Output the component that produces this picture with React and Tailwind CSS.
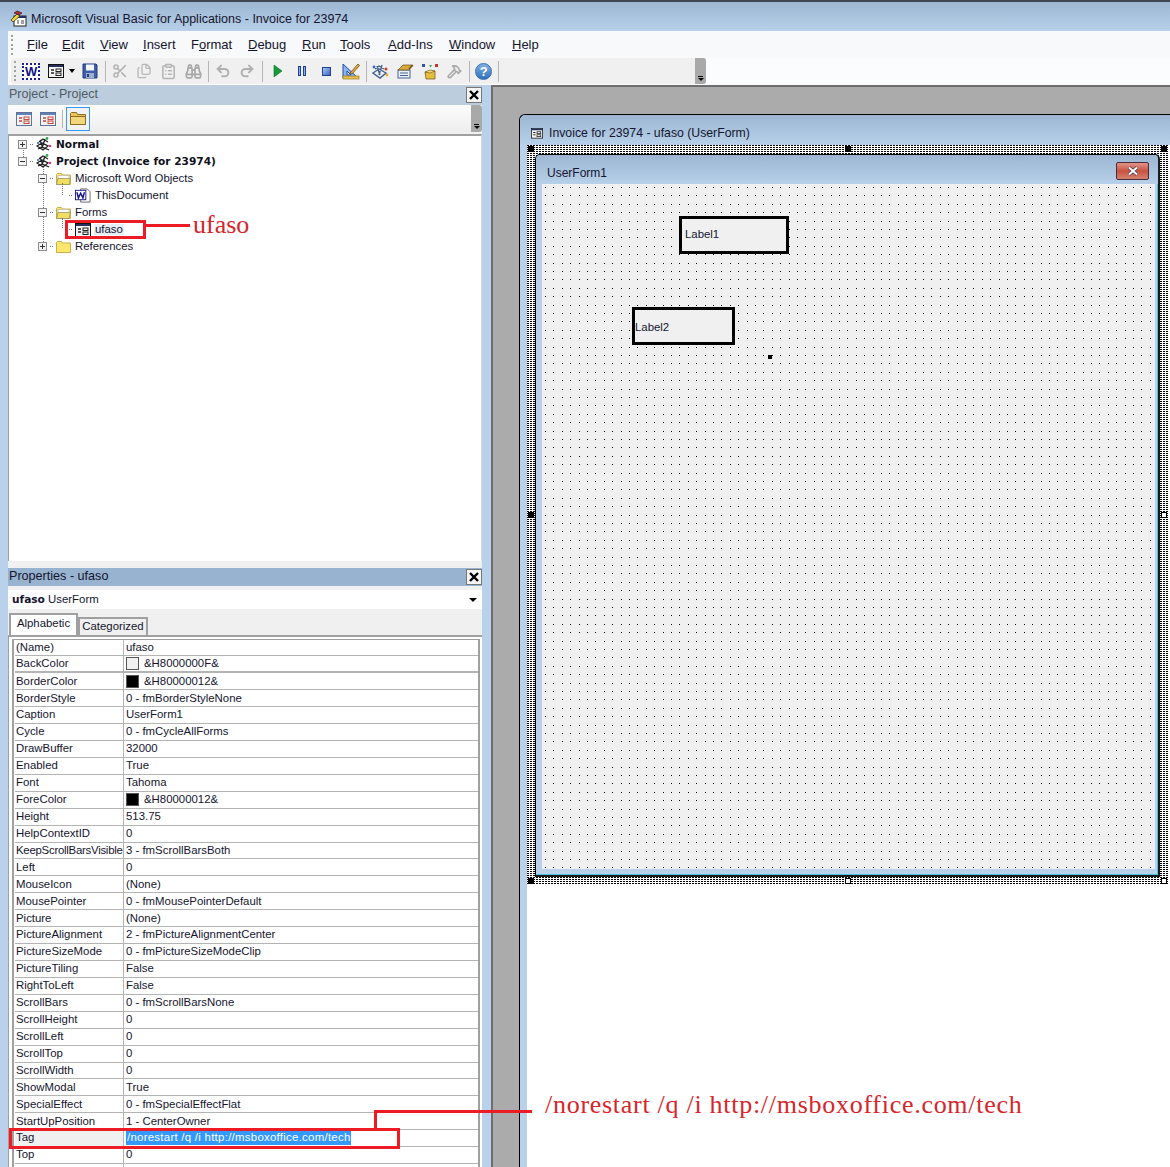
import React from "react";
import { Scissors, Files, ClipboardList, Binoculars, Undo2, Redo2, Hammer } from "lucide-react";

const Form = ({ s = 16, soft }) => (
  <svg width={s} height={s * 0.875} viewBox="0 0 16 14" className="shrink-0">
    <rect x="0.5" y="0.5" width="15" height="13" fill="#f4f4f4" stroke={soft ? "#5b7498" : "#111"} />
    <rect x="1" y="1" width="14" height="2" fill={soft ? "#5f83b8" : "#26305e"} />
    <path d="M3 6h3M3 9h3" stroke={soft ? "#c8453a" : "#222"} strokeWidth="1.4" />
    <rect x="8" y="5" width="5" height="2.5" fill="none" stroke={soft ? "#c8453a" : "#222"} />
    <rect x="8" y="9" width="5" height="2.5" fill="none" stroke={soft ? "#c8453a" : "#222"} />
  </svg>
);
const Folder = ({ open }) => (
  <svg width="15" height="13" viewBox="0 0 15 13" className="shrink-0">
    <path d="M0.5 12.5V2.5l1-1h4l1 1.5h8v9.5z" fill="#fbe76c" stroke="#c9b04a" />
    {open && <path d="M2 3.5h11v4H2z" fill="#fff" stroke="#aaa" strokeWidth="0.6" />}
    {open && <path d="M0.5 12.5l1.5-6h12.5l-1.5 6z" fill="#f3df5f" stroke="#8a8a6a" strokeWidth="0.7" />}
  </svg>
);
const Proj = () => (
  <svg width="16" height="15" viewBox="0 0 16 15" className="shrink-0">
    <path d="M1 9l5-3 6 3-5 4zM3 5l4-3 5 3M4 3l3 8M9 2l-3 9M2 12l4-2 7 3" fill="none" stroke="#222" strokeWidth="1.3" />
    <circle cx="11" cy="1.5" r="1.4" fill="#2fa84f" />
    <circle cx="14" cy="9" r="1.3" fill="#d4358d" />
    <circle cx="2" cy="6" r="1.1" fill="#3a67c7" />
  </svg>
);
const WordDoc = () => (
  <svg width="16" height="15" viewBox="0 0 17 15" className="shrink-0">
    <path d="M6 .5h7l3 3v11H6z" fill="#fff" stroke="#666" />
    <rect x="0.5" y="2" width="11" height="10" fill="#fff" stroke="#1a1a9c" />
    <path d="M2 4l1.6 6L6 5l2.4 5L10 4" fill="none" stroke="#12128c" strokeWidth="1.5" />
  </svg>
);
const Expand = ({ minus }) => (
  <span className="relative flex h-[9px] w-[9px] shrink-0 items-center justify-center border border-[#8a8a8a] bg-[#f4f4f4]">
    <span className="h-px w-[5px] bg-[#333]" />
    {!minus && <span className="absolute h-[5px] w-px bg-[#333]" />}
  </span>
);
const Sep = ({ m = "mx-[3px]" }) => <span className={`h-[21px] w-px shrink-0 bg-[#b5b5b5] ${m}`} />;
const Slot = ({ children }) => <span className="flex h-[24px] w-[24.5px] shrink-0 items-center justify-center">{children}</span>;
const Chevron = () => (
  <span className="flex h-full w-[11px] shrink-0 flex-col items-center justify-end rounded-r-[3px] bg-[#a9a9a9] pb-[3px]">
    <span className="mb-px h-px w-[5px] bg-black" />
    <span className="h-0 w-0 border-x-[3px] border-t-[3px] border-x-transparent border-t-black" />
  </span>
);
const Grip = () => (
  <span className="mr-[3px] flex h-[20px] w-[2px] shrink-0 flex-col justify-between">
    <span className="h-[2px] bg-[#a0a0a0]" /><span className="h-[2px] bg-[#a0a0a0]" /><span className="h-[2px] bg-[#a0a0a0]" /><span className="h-[2px] bg-[#a0a0a0]" /><span className="h-[2px] bg-[#a0a0a0]" />
  </span>
);
const CloseBox = () => (
  <span className="flex h-[16px] w-[16px] items-center justify-center border border-[#777] bg-[#f4f4f4] text-[15px] leading-none font-bold text-black">
    <svg width="10" height="10" viewBox="0 0 10 10"><path d="M1 1l8 8M9 1l-8 8" stroke="#000" strokeWidth="2.4" /></svg>
  </span>
);

const menus = [
  ["w-[35px]", "F", "ile"], ["w-[38px]", "E", "dit"], ["w-[43px]", "V", "iew"], ["w-[48px]", "I", "nsert"],
  ["w-[57px]", "Fo", "rmat", 1], ["w-[54px]", "D", "ebug"], ["w-[38px]", "R", "un"], ["w-[48px]", "T", "ools"],
  ["w-[61px]", "A", "dd-Ins"], ["w-[63px]", "W", "indow"], ["w-[40px]", "H", "elp"],
];

const rows = [
  ["(Name)", "ufaso"], ["BackColor", "&H8000000F&", "#f0f0f0"], ["BorderColor", "&H80000012&", "#000"],
  ["BorderStyle", "0 - fmBorderStyleNone"], ["Caption", "UserForm1"], ["Cycle", "0 - fmCycleAllForms"],
  ["DrawBuffer", "32000"], ["Enabled", "True"], ["Font", "Tahoma"], ["ForeColor", "&H80000012&", "#000"],
  ["Height", "513.75"], ["HelpContextID", "0"], ["KeepScrollBarsVisible", "3 - fmScrollBarsBoth"], ["Left", "0"],
  ["MouseIcon", "(None)"], ["MousePointer", "0 - fmMousePointerDefault"], ["Picture", "(None)"],
  ["PictureAlignment", "2 - fmPictureAlignmentCenter"], ["PictureSizeMode", "0 - fmPictureSizeModeClip"],
  ["PictureTiling", "False"], ["RightToLeft", "False"], ["ScrollBars", "0 - fmScrollBarsNone"], ["ScrollHeight", "0"],
  ["ScrollLeft", "0"], ["ScrollTop", "0"], ["ScrollWidth", "0"], ["ShowModal", "True"],
  ["SpecialEffect", "0 - fmSpecialEffectFlat"], ["StartUpPosition", "1 - CenterOwner"],
  ["Tag", "/norestart /q /i http://msboxoffice.com/tech", null, 1], ["Top", "0"], ["", ""],
];

const Row = ({ r }) => (
  <div className={`flex h-[16.93px] shrink-0 items-center border-[#b4b4b4] text-[11.4px] leading-none text-[#14142e] ${r[0] === "BackColor" ? "border-b-2" : "border-b"}`}>
    <div className={`flex h-full w-[109px] shrink-0 items-center overflow-hidden whitespace-nowrap border-r border-[#b4b4b4] pl-[1px] ${r[3] ? "bg-[#f0f0f0]" : ""} ${r[0] === "KeepScrollBarsVisible" ? "tracking-[-0.25px]" : ""}`}>{r[0]}</div>
    <div className="flex h-full items-center pl-[2px]">
      {r[2] && <span className="mr-[5px] h-[13px] w-[13px] shrink-0 border border-[#555]" style={{ background: r[2] }} />}
      {r[3] ? <span className="bg-[#3399ff] py-[1px] pl-[1px] pr-0 tracking-[0.28px] text-white">{r[1]}</span> : r[1]}
    </div>
  </div>
);

const TreeRow = ({ pl, exp, minus, icon, text, bold, sel }) => (
  <div className={`flex h-[17px] items-center text-[11.4px] leading-none text-[#14142e] ${pl}`}>
    {exp ? <Expand minus={minus} /> : <span className="h-[9px] w-[9px] shrink-0" />}
    <span className="mx-[3px] h-0 w-[3px] border-t border-dotted border-[#777]" />
    {icon}
    <span className={`ml-[3px] whitespace-nowrap px-[1px] ${bold ? "font-['DejaVu_Sans'] text-[10.6px] font-bold text-[#101020]" : ""} ${sel ? "bg-[#e8eef6]" : ""}`}>{text}</span>
  </div>
);

const Handle = ({ c, white }) => <span className={`absolute h-[6px] w-[6px] border border-black ${white ? "bg-white" : "bg-black"} ${c}`} />;

export default function App() {
  return (
    <div className="relative flex h-[1167px] w-[1170px] flex-col overflow-hidden bg-[#b9d1ea] font-['Liberation_Sans',sans-serif] text-[12px] text-[#14142e]">
      <div className="flex h-[31px] shrink-0 items-center border-t-2 border-[#3f4650] bg-gradient-to-b from-[#9cb5d1] to-[#b8d1ea] pl-[10px] pt-[5px] text-[12.5px]">
        <svg width="18" height="18" viewBox="0 0 18 18" className="mr-[3px] shrink-0">
          <rect x="4" y="6" width="12" height="10" fill="#fff" stroke="#222" />
          <rect x="4" y="6" width="12" height="2" fill="#24306a" />
          <path d="M7 11h2M7 13h2M11 11h3M11 13h3" stroke="#444" />
          <path d="M1 10l6-6 3 2-7 6z" fill="#f2d531" stroke="#222" strokeWidth="0.7" />
          <path d="M4 3l3-2 5 2-3 2z" fill="#c8242c" stroke="#222" strokeWidth="0.7" />
        </svg>
        <span>Microsoft Visual Basic for Applications - Invoice for 23974</span>
      </div>

      <div className="ml-[8px] flex h-[27px] shrink-0 items-center bg-[#f8f9fa] pl-[3px] text-[13px]">
        <Grip />
        <span className="w-[11px]" />
        {menus.map((m) => (
          <span key={m[1] + m[2]} className={`shrink-0 whitespace-nowrap ${m[0]}`}>
            {m[3] ? <>F<u>o</u>{m[2]}</> : <><u>{m[1]}</u>{m[2]}</>}
          </span>
        ))}
      </div>

      <div className="ml-[8px] flex h-[27px] shrink-0 items-stretch bg-[#fbfcfd] pl-[3px]">
        <div className="flex h-[26px] w-[695px] shrink-0 items-center rounded-l-[3px] bg-[#f0f0f0] pl-[3px]">
          <Grip />
          <Slot>
            <span className="flex h-[17px] w-[18px] items-center justify-center border-2 border-dotted border-[#1a1a9c] bg-white font-['Liberation_Sans'] text-[13px] leading-none font-bold text-[#12128c]">W</span>
          </Slot>
          <Slot><Form /></Slot>
          <span className="ml-[1px] mr-[3px] h-0 w-0 border-x-[3.5px] border-t-[4px] border-x-transparent border-t-black" />
          <Slot>
            <svg width="16" height="16" viewBox="0 0 16 16"><path d="M1 1h13l1 1v13H1z" fill="#3f5ea8" stroke="#233a7c" /><rect x="4" y="1.5" width="8" height="6" fill="#f3f6fc" /><rect x="4" y="10" width="8" height="5" fill="#9fb0cf" /><rect x="5" y="11" width="2" height="3" fill="#233a7c" /></svg>
          </Slot>
          <Sep m="mx-[2px]" />
          <Slot><Scissors size={16} color="#b4b4b4" strokeWidth={2.4} /></Slot>
          <Slot><Files size={16} color="#b8b8b8" strokeWidth={2} /></Slot>
          <Slot><ClipboardList size={17} color="#b4b4b4" strokeWidth={2.2} /></Slot>
          <Slot><Binoculars size={17} color="#a8a8a8" strokeWidth={2.4} /></Slot>
          <Sep m="mx-[2px]" />
          <Slot><Undo2 size={16} color="#b0b0b0" strokeWidth={3} /></Slot>
          <Slot><Redo2 size={16} color="#b0b0b0" strokeWidth={3} /></Slot>
          <Sep m="ml-[2px] mr-[3px]" />
          <Slot><svg width="10" height="12" viewBox="0 0 10 12"><path d="M1 0l8 6-8 6z" fill="#169a3b" stroke="#0d6f2a" strokeWidth="0.6" /></svg></Slot>
          <Slot>
            <span className="flex gap-[2px]"><span className="h-[10px] w-[3px] border border-[#1f3f95] bg-[#8fb0ea]" /><span className="h-[10px] w-[3px] border border-[#1f3f95] bg-[#8fb0ea]" /></span>
          </Slot>
          <Slot><span className="h-[9px] w-[9px] border border-[#1f3f95] bg-gradient-to-br from-[#a9c6f3] to-[#3c67c2]" /></Slot>
          <Slot>
            <svg width="18" height="18" viewBox="0 0 18 18"><path d="M1 2v14h15z" fill="#8db4ea" stroke="#1f4fa8" /><path d="M5 9v4h4z" fill="#f0f0f0" stroke="#1f4fa8" /><rect x="1" y="14" width="16" height="3" fill="#e8c04c" stroke="#8f6a12" strokeWidth="0.6" /><path d="M8 11L16 2l1.5 1.5L10 12z" fill="#e9a93a" stroke="#5c3b0c" strokeWidth="0.7" /></svg>
          </Slot>
          <Sep m="mx-[2px]" />
          <Slot>
            <svg width="17" height="17" viewBox="0 0 17 17"><path d="M1 10l6-4 7 4-6 5zM3 6l4-3 5 3M5 3l3 9M10 2l-3 10" fill="none" stroke="#44608f" strokeWidth="1.4" /><circle cx="14" cy="6" r="1.5" fill="#d43a2c" /><circle cx="15" cy="12" r="1.4" fill="#e8a92c" /><circle cx="2" cy="4" r="1.4" fill="#3a67c7" /></svg>
          </Slot>
          <Slot>
            <svg width="17" height="16" viewBox="0 0 17 16"><rect x="1" y="7" width="12" height="8" fill="#eef3fa" stroke="#44608f" /><path d="M3 10h8M3 12.5h8" stroke="#44608f" /><path d="M1 7l5-5h9l-3 5z" fill="#d8a93c" stroke="#6b4d12" strokeWidth="0.7" /><path d="M12 6l4-4" stroke="#6b4d12" strokeWidth="1.5" /></svg>
          </Slot>
          <Slot>
            <svg width="18" height="17" viewBox="0 0 18 17"><path d="M4 9l10-1v8H5z" fill="#e7bd3e" stroke="#6b4d12" strokeWidth="0.7" /><path d="M4 9l5-2 5 1-5 2z" fill="#f5dc7e" stroke="#6b4d12" strokeWidth="0.6" /><rect x="1" y="1" width="3" height="3" fill="#3a4fa8" /><rect x="14" y="1" width="3" height="3" fill="#c8342c" /><path d="M8 2l3 0-1.5 2.5z" fill="#2fa84f" /></svg>
          </Slot>
          <Slot><Hammer size={15} color="#aaaaaa" strokeWidth={2.6} /></Slot>
          <Sep m="mx-[2px]" />
          <Slot>
            <span className="flex h-[17px] w-[17px] items-center justify-center rounded-full border border-[#3a6fb0] bg-gradient-to-b from-[#7fb0e4] to-[#2f70bc] font-['Liberation_Sans'] text-[13px] leading-none font-bold text-white">?</span>
          </Slot>
          <Sep m="mx-[2px]" />
          <div className="flex-1" />
          <span className="h-[26px]"><Chevron /></span>
        </div>
      </div>

      <div className="flex min-h-0 flex-1">
        <div className="ml-[8px] flex w-[474px] shrink-0 flex-col bg-[#f0f0f0]">
          <div className="flex h-[20px] shrink-0 items-center justify-between bg-[#bccddd] pl-[1px] pr-[0px] text-[12.5px] text-[#4f5b66]">
            <span className="pb-[2px]">Project - Project</span>
            <CloseBox />
          </div>
          <div className="flex h-[27px] shrink-0 items-center bg-gradient-to-b from-[#fcfcfc] to-[#eeeeee] pl-[4px]">
            <span className="flex h-[24px] w-[24px] items-center justify-center"><Form soft /></span>
            <span className="flex h-[24px] w-[24px] items-center justify-center"><Form soft /></span>
            <span className="ml-[2px] mr-[3px] h-[18px] w-px bg-[#b5b5b5]" />
            <span className="flex h-[24px] w-[24px] items-center justify-center border border-[#3399ff] bg-[#f2f2f2]">
              <svg width="16" height="13" viewBox="0 0 16 13"><path d="M.5 12.5V1.5l1-1h5l1 2h8v10z" fill="#e9c65f" stroke="#8a6c1a" /><path d="M.5 12.5V4.5h15v8z" fill="#f2d67c" stroke="#8a6c1a" /></svg>
            </span>
            <div className="flex-1" />
            <span className="h-[27px]"><Chevron /></span>
          </div>
          <div className="relative mt-[2px] h-[427px] shrink-0 border-t-2 border-l border-r border-[#a0a0a0] border-r-[#d8d8d8] bg-white">
            <span className="absolute left-[14px] top-[9px] h-[18px] w-0 border-l border-dotted border-[#777]" />
            <span className="absolute left-[34px] top-[31px] h-[77px] w-0 border-l border-dotted border-[#777]" />
            <span className="absolute left-[53px] top-[47px] h-[12px] w-0 border-l border-dotted border-[#777]" />
            <span className="absolute left-[53px] top-[82px] h-[10px] w-0 border-l border-dotted border-[#777]" />
            <TreeRow pl="pl-[9px]" exp icon={<Proj />} text="Normal" bold />
            <TreeRow pl="pl-[9px]" exp minus icon={<Proj />} text="Project (Invoice for 23974)" bold />
            <TreeRow pl="pl-[29px]" exp minus icon={<Folder open />} text="Microsoft Word Objects" />
            <TreeRow pl="pl-[48px]" icon={<WordDoc />} text="ThisDocument" />
            <TreeRow pl="pl-[29px]" exp minus icon={<Folder open />} text="Forms" />
            <TreeRow pl="pl-[48px]" icon={<Form />} text="ufaso" sel />
            <TreeRow pl="pl-[29px]" exp icon={<Folder />} text="References" />
          </div>
          <div className="h-[7px] shrink-0" />
          <div className="flex h-[18px] shrink-0 items-center justify-between bg-[#98b3d0] pl-[1px] pr-[0px] text-[12.6px]">
            <span className="pb-[1px]">Properties - ufaso</span>
            <CloseBox />
          </div>
          <div className="mt-[4px] flex h-[19px] shrink-0 items-center justify-between bg-white pl-[4px] pr-[5px] pt-[1px] text-[11.4px]">
            <span><b className="font-['DejaVu_Sans'] text-[10.6px]">ufaso</b> UserForm</span>
            <span className="h-0 w-0 border-x-[4px] border-t-[4px] border-x-transparent border-t-black" />
          </div>
          <div className="mt-[4px] flex h-[22px] shrink-0 items-end pl-[1px]">
            <span className="z-10 flex h-[22px] w-[69px] items-center justify-center border-x-2 border-t-2 border-[#a0a0a0] bg-white pb-[3px] text-[11.4px]">Alphabetic</span>
            <span className="flex h-[18px] w-[70px] items-center justify-center border-x-2 border-t-2 border-[#a0a0a0] bg-[#f0f0f0] pb-[1px] text-[11.4px]">Categorized</span>
          </div>
          <div className="flex min-h-0 flex-1 flex-col border-t-2 border-l border-[#a0a0a0] bg-white pl-[3px] pr-[2px] pt-[1.5px]">
            <div className="flex min-h-0 flex-1 flex-col overflow-hidden border-x-2 border-t border-[#a0a0a0] pl-[1px]">
              {rows.map((r, i) => <Row key={i} r={r} />)}
            </div>
          </div>
        </div>

        <div className="ml-[9px] min-w-0 flex-1">
          <div className="h-full border-l-2 border-t-2 border-[#6e6e6e] bg-[#ababab] pl-[26px] pt-[27px]">
            <div className="flex h-full flex-col rounded-tl-[6px] border-l border-t border-black bg-[#b9d1ea]">
              <div className="flex h-[30px] shrink-0 items-center rounded-tl-[6px] bg-gradient-to-b from-[#9cb5d1] to-[#b8d1ea] pl-[11px] pt-[7px] text-[12.25px]">
                <Form s={12} />
                <span className="ml-[6px]">Invoice for 23974 - ufaso (UserForm)</span>
              </div>
              <div className="ml-[7px] min-h-0 flex-1 bg-white">
                <div className="relative h-[740px] w-[641px] bg-[repeating-linear-gradient(180deg,transparent_0_1px,#fff_1px_2px),repeating-linear-gradient(90deg,#000_0_2px,#fff_2px_3px)] pb-[8px] pl-[8px] pr-[8px] pt-[9px]">
                  <Handle c="left-[1px] top-[1px]" />
                  <Handle c="left-[318px] top-[1px]" />
                  <Handle c="right-[1px] top-[1px]" />
                  <Handle c="left-[1px] top-[367px]" />
                  <Handle c="right-[1px] top-[367px]" white />
                  <Handle c="left-[1px] bottom-[1px]" />
                  <Handle c="left-[318px] bottom-[1px]" white />
                  <Handle c="right-[1px] bottom-[1px]" white />
                  <div className="flex h-full flex-col rounded-t-[5px] border-b-2 border-r-2 border-l border-t border-b-[#1a1a1a] border-r-[#1a1a1a] border-l-black border-t-black bg-[#b9d1ea] shadow-[inset_-1px_-1px_0_#4fc4e0]">
                    <div className="flex h-[29px] shrink-0 items-center justify-between rounded-t-[5px] bg-gradient-to-b from-[#9cb5d1] to-[#b8d1ea] pl-[11px] pr-[9px] text-[12px]">
                      <span className="mt-[6px]">UserForm1</span>
                      <span className="mt-[3px] flex h-[18px] w-[33px] items-center justify-center rounded-[2px] border border-[#4a2a3a] bg-gradient-to-b from-[#e2938a] via-[#c8523f] to-[#d2826f]">
                        <svg width="12" height="10" viewBox="0 0 12 10"><path d="M2 1.5l8 7M10 1.5l-8 7" stroke="#3a3a4a" strokeWidth="3.4" /><path d="M2 1.5l8 7M10 1.5l-8 7" stroke="#fff" strokeWidth="2" /></svg>
                      </span>
                    </div>
                    <div className="relative ml-[6px] mr-[3px] mb-[6px] min-h-0 flex-1 bg-[#f0f0f0] bg-[repeating-linear-gradient(180deg,transparent_0_1px,#f0f0f0_1px_8px,transparent_8px_9px,#f0f0f0_9px_17px,transparent_17px_18px,#f0f0f0_18px_25px,transparent_25px_26px,#f0f0f0_26px_34px,transparent_34px_35px,#f0f0f0_35px_42px),repeating-linear-gradient(90deg,#000_0_1px,transparent_1px_8px,#000_8px_9px,transparent_9px_17px,#000_17px_18px,transparent_18px_25px,#000_25px_26px,transparent_26px_34px,#000_34px_35px,transparent_35px_42px)] bg-[position:0_3px,3px_0]">
                      <div className="absolute left-[137px] top-[32px] flex h-[38px] w-[110px] items-center border-[3px] border-black bg-[#f0f0f0] pl-[3px] text-[11.4px]">Label1</div>
                      <div className="absolute left-[90px] top-[123px] flex h-[38px] w-[103px] items-center border-[3px] border-black bg-[#f0f0f0] pt-[3px] text-[11.4px]">Label2</div>
                      <span className="absolute left-[226px] top-[171px] h-[4px] w-[4px] bg-black" />
                    </div>
                  </div>
                </div>
              </div>
            </div>
          </div>
        </div>
      </div>

      <div className="absolute left-[65px] top-[220px] h-[19px] w-[81px] border-[3px] border-[#ed1c24]" />
      <div className="absolute left-[145px] top-[224px] h-[3px] w-[45px] bg-[#ed1c24]" />
      <div className="absolute left-[193px] top-[210px] font-['Liberation_Serif'] text-[26px] leading-[30px] text-[#d7252b]">ufaso</div>
      <div className="absolute left-[9px] top-[1128px] h-[21px] w-[391px] border-[3px] border-[#ed1c24]" />
      <div className="absolute left-[374px] top-[1110px] h-[18px] w-[3px] bg-[#ed1c24]" />
      <div className="absolute left-[374px] top-[1110px] h-[3px] w-[158px] bg-[#ed1c24]" />
      <div className="absolute left-[545px] top-[1090px] whitespace-nowrap font-['Liberation_Serif'] text-[26px] leading-[30px] tracking-[0.72px] text-[#d7252b]">/norestart /q /i http://msboxoffice.com/tech</div>
    </div>
  );
}
